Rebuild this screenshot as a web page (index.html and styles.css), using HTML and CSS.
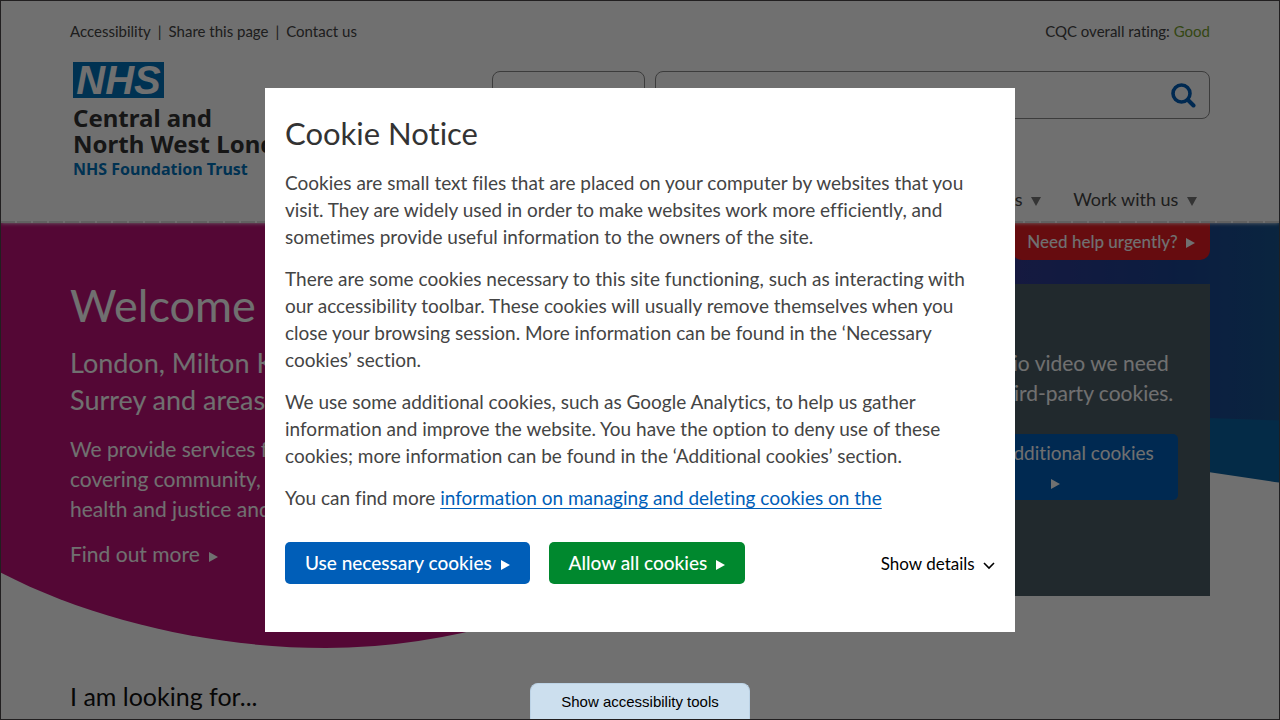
FILE: index.html
```html
<!DOCTYPE html>
<html lang="en">
<head>
  <meta charset="UTF-8">
  <meta name="viewport" content="width=device-width, initial-scale=1.0">
  <title>Central and North West London NHS Foundation Trust</title>
  <link rel="stylesheet" href="styles.css">
</head>
<body>
  <header class="header">
    <div class="container">
      <div class="topbar">
        <ul class="toplinks">
          <li><a href="#">Accessibility</a></li>
          <li><a href="#">Share this page</a></li>
          <li><a href="#">Contact us</a></li>
        </ul>
        <p class="rating">CQC overall rating: <a href="#">Good</a></p>
      </div>
      <div class="masthead">
        <a href="#" class="logo">
          <span class="logo-nhs">NHS</span>
          <span class="logo-name">Central and<br>North West London</span>
          <span class="logo-trust">NHS Foundation Trust</span>
        </a>
        <form class="search">
          <select class="search-type" aria-label="Search in"><option></option></select>
          <div class="search-box">
            <input type="text" aria-label="Search">
            <button type="submit" aria-label="Search">
              <svg width="26" height="26" viewBox="0 0 26 26" fill="none" stroke="#005eb8">
                <circle cx="11.5" cy="11.5" r="8.5" stroke-width="3.6"/>
                <path d="M18 18L23.5 23.5" stroke-width="4" stroke-linecap="round"/>
              </svg>
            </button>
          </div>
        </form>
      </div>
      <nav class="nav">
        <a href="#">Services <span class="down"></span></a>
        <a href="#">Work with us <span class="down"></span></a>
      </nav>
    </div>
  </header>

  <main>
    <section class="hero">
      <svg class="hero-bg" viewBox="0 0 1278 426" preserveAspectRatio="none" aria-hidden="true">
        <defs>
          <linearGradient id="blue" x1="0" y1="0" x2="1" y2="0">
            <stop offset="0.6" stop-color="#3d3590"/>
            <stop offset="0.88" stop-color="#1b4392"/>
            <stop offset="1" stop-color="#175490"/>
          </linearGradient>
        </defs>
        <path fill="#0b62a1" d="M400 0H1278V259Q1080 227 860 222T400 260Z"/>
        <path fill="url(#blue)" d="M400 0H1278V197Q1100 190 900 194T400 240Z"/>
        <path fill="#bf1279" d="M0 0H760Q800 250 560 380Q440 424 325 424C215 424 95 398 0 349Z"/>
      </svg>
      <div class="container">
        <div class="urgent"><a href="#">Need help urgently? <span class="arrow"></span></a></div>
        <div class="hero-grid">
          <div class="intro">
            <h1>Welcome to CNWL</h1>
            <h2>London, Milton Keynes,<br>Surrey and areas beyond</h2>
            <p>We provide services for all ages,<br>covering community, mental<br>health and justice and more.</p>
            <a href="#">Find out more <span class="arrow"></span></a>
          </div>
          <div class="video">
            <p>For studio video we need<br>to use third-party cookies.</p>
            <button type="button">Allow additional cookies<br><span class="arrow"></span></button>
          </div>
        </div>
      </div>
    </section>
    <section class="looking container">
      <h2>I am looking for...</h2>
    </section>
  </main>

  <div class="overlay">
    <div class="cookie" role="dialog" aria-labelledby="cookie-title">
      <div class="cookie-text">
        <h2 id="cookie-title">Cookie Notice</h2>
        <p>Cookies are small text files that are placed on your computer by websites that you<br>
          visit. They are widely used in order to make websites work more efficiently, and<br>
          sometimes provide useful information to the owners of the site.</p>
        <p>There are some cookies necessary to this site functioning, such as interacting with<br>
          our accessibility toolbar. These cookies will usually remove themselves when you<br>
          close your browsing session. More information can be found in the ‘Necessary<br>
          cookies’ section.</p>
        <p>We use some additional cookies, such as Google Analytics, to help us gather<br>
          information and improve the website. You have the option to deny use of these<br>
          cookies; more information can be found in the ‘Additional cookies’ section.</p>
        <p>You can find more <a href="#">information on managing and deleting cookies on the</a></p>
      </div>
      <div class="cookie-actions">
        <button type="button" class="btn btn-blue">Use necessary cookies <span class="arrow"></span></button>
        <button type="button" class="btn btn-green">Allow all cookies <span class="arrow"></span></button>
        <button type="button" class="details">Show details
          <svg width="12" height="8" viewBox="0 0 12 8" fill="none" stroke="#000" stroke-width="1.6"><path d="M1 1l5 5 5-5"/></svg>
        </button>
      </div>
    </div>
  </div>

  <button type="button" class="tools">Show accessibility tools</button>
</body>
</html>
```
FILE: styles.css
```css
* {
  box-sizing: border-box;
}

body {
  margin: 0;
  min-height: 100vh;
  border: 1px solid #4c484a;
  font-family: Lato, "Open Sans", sans-serif;
  font-size: 18px;
  font-variant-ligatures: none;
  color: #444;
  background: #fff;
}

h1, h2, p, ul {
  margin: 0;
  padding: 0;
  font-weight: 400;
}

a {
  color: inherit;
  text-decoration: none;
}

button, input, select {
  font-family: inherit;
  font-variant-ligatures: none;
  cursor: pointer;
}

.container {
  max-width: 1140px;
  margin: 0 auto;
}

/* small triangles after links and buttons */
.arrow {
  display: inline-block;
  margin-left: 4px;
  border-left: 9px solid currentColor;
  border-top: 5px solid transparent;
  border-bottom: 5px solid transparent;
}

.down {
  display: inline-block;
  margin-left: 4px;
  border-top: 9px solid #777;
  border-left: 5px solid transparent;
  border-right: 5px solid transparent;
}

/* Header */
.header {
  position: relative;
  z-index: 1;
  height: 222px;
  background: #fff;
  box-shadow: 0 0 4px #fff;
}

/* dotted edge above the banner */
.header::after {
  content: "";
  position: absolute;
  left: 0;
  right: 0;
  bottom: 0;
  height: 2px;
  background: repeating-linear-gradient(to right, #ddd 0, #ddd 14px, #fff 14px, #fff 16px);
}

.topbar {
  display: flex;
  justify-content: space-between;
  padding-top: 20px;
  font-size: 15px;
  line-height: 20px;
}

.toplinks {
  display: flex;
  list-style: none;
}

.toplinks li + li::before {
  content: "|";
  margin: 0 7px;
}

.rating a {
  color: #78a22f;
}

.masthead {
  display: flex;
  justify-content: space-between;
  align-items: flex-start;
  padding-top: 21px;
}

.logo {
  display: flex;
  flex-direction: column;
  align-items: flex-start;
  padding-left: 3px;
  font-family: "Noto Sans", sans-serif;
  font-weight: 700;
}

.logo-nhs {
  width: 91px;
  height: 36px;
  font-family: "Liberation Sans", sans-serif;
  font-size: 40px;
  line-height: 36px;
  font-weight: 700;
  font-style: italic;
  text-align: center;
  color: #fff;
  background: #0072bc;
}

.logo-name {
  margin-top: 7px;
  font-size: 24px;
  line-height: 26px;
  color: #333;
}

.logo-trust {
  font-size: 16px;
  line-height: 24px;
  color: #0072bc;
}

.search {
  display: flex;
  gap: 10px;
  width: 63%;
  margin-top: 9px;
}

.search-type {
  width: 153px;
  height: 48px;
  border: 1px solid #888;
  border-radius: 8px;
  background: #fff;
  appearance: none;
}

.search-box {
  display: flex;
  flex: 1;
  height: 48px;
  border: 1px solid #888;
  border-radius: 8px;
}

.search-box input {
  flex: 1;
  border: none;
  background: none;
}

.search-box button {
  display: flex;
  align-items: center;
  padding: 0 13px;
  border: none;
  background: none;
}

.nav {
  display: flex;
  justify-content: flex-end;
  gap: 32px;
  padding: 5px 13px 0 0;
  line-height: 27px;
}

/* Hero */
.hero {
  position: relative;
  height: 427px;
  color: #fff;
}

.hero-bg {
  position: absolute;
  width: 100%;
  height: 100%;
}

.hero .container {
  position: relative;
}

.urgent {
  display: flex;
  justify-content: flex-end;
}

.urgent a {
  padding: 6px 15px 5px;
  border-radius: 0 0 10px 10px;
  font-size: 17px;
  line-height: 26px;
  font-weight: 500;
  background: #e81c24;
}

.hero-grid {
  display: flex;
  justify-content: space-between;
  align-items: flex-start;
  padding-top: 24px;
}

.intro {
  font-size: 21px;
  line-height: 30px;
}

.intro h1 {
  font-size: 45px;
  line-height: 42px;
}

.intro h2 {
  margin: 18px 0 16px;
  font-size: 27px;
  line-height: 37px;
}

.intro p {
  margin-bottom: 15px;
}

.video {
  display: flex;
  flex-direction: column;
  align-items: center;
  width: 314px;
  padding: 64px 32px 96px;
  font-size: 21px;
  line-height: 30px;
  text-align: center;
  white-space: nowrap;
  background: #4d5d68;
}

.video button {
  width: 100%;
  margin-top: 26px;
  padding: 4px 12px;
  border: none;
  border-radius: 5px;
  font-size: 19px;
  line-height: 29px;
  color: #fff;
  background: #005eb8;
}

.looking {
  padding-top: 29px;
}

.looking h2 {
  font-size: 25px;
  line-height: 34px;
  color: #111;
}

/* Cookie notice */
.overlay {
  position: fixed;
  inset: 0;
  display: flex;
  justify-content: center;
  align-items: center;
  background: rgba(0, 0, 0, 0.56);
  z-index: 10;
}

.cookie {
  width: 750px;
  max-width: 100%;
  padding: 27px 20px 48px;
  background: #fff;
}

.cookie h2 {
  margin-bottom: 18px;
  font-size: 31px;
  line-height: 36px;
  color: #333;
}

.cookie p {
  margin-bottom: 15px;
  font-size: 19px;
  line-height: 27px;
}

.cookie-text a {
  color: #005eb8;
  text-decoration: underline;
  text-underline-offset: 3px;
}

.cookie-actions {
  display: flex;
  align-items: center;
  gap: 19px;
  margin-top: 31px;
}

.btn {
  padding: 8px 20px;
  border: none;
  border-radius: 5px;
  font-size: 19px;
  line-height: 26px;
  font-weight: 500;
  color: #fff;
}

.btn-blue {
  background: #005eb8;
}

.btn-green {
  background: #00882e;
}

.details {
  margin-left: auto;
  padding: 0;
  border: none;
  font-size: 17px;
  color: #000;
  background: none;
}

.details svg {
  margin-left: 4px;
}

/* Accessibility tab */
.tools {
  position: fixed;
  left: 50%;
  bottom: 1px;
  transform: translateX(-50%);
  width: 220px;
  height: 36px;
  border: 1px solid #bcd3e6;
  border-bottom: none;
  border-radius: 8px 8px 0 0;
  font-family: "Liberation Sans", Arial, sans-serif;
  font-size: 15px;
  color: #000;
  background: #ccdfee;
  z-index: 11;
}
```
